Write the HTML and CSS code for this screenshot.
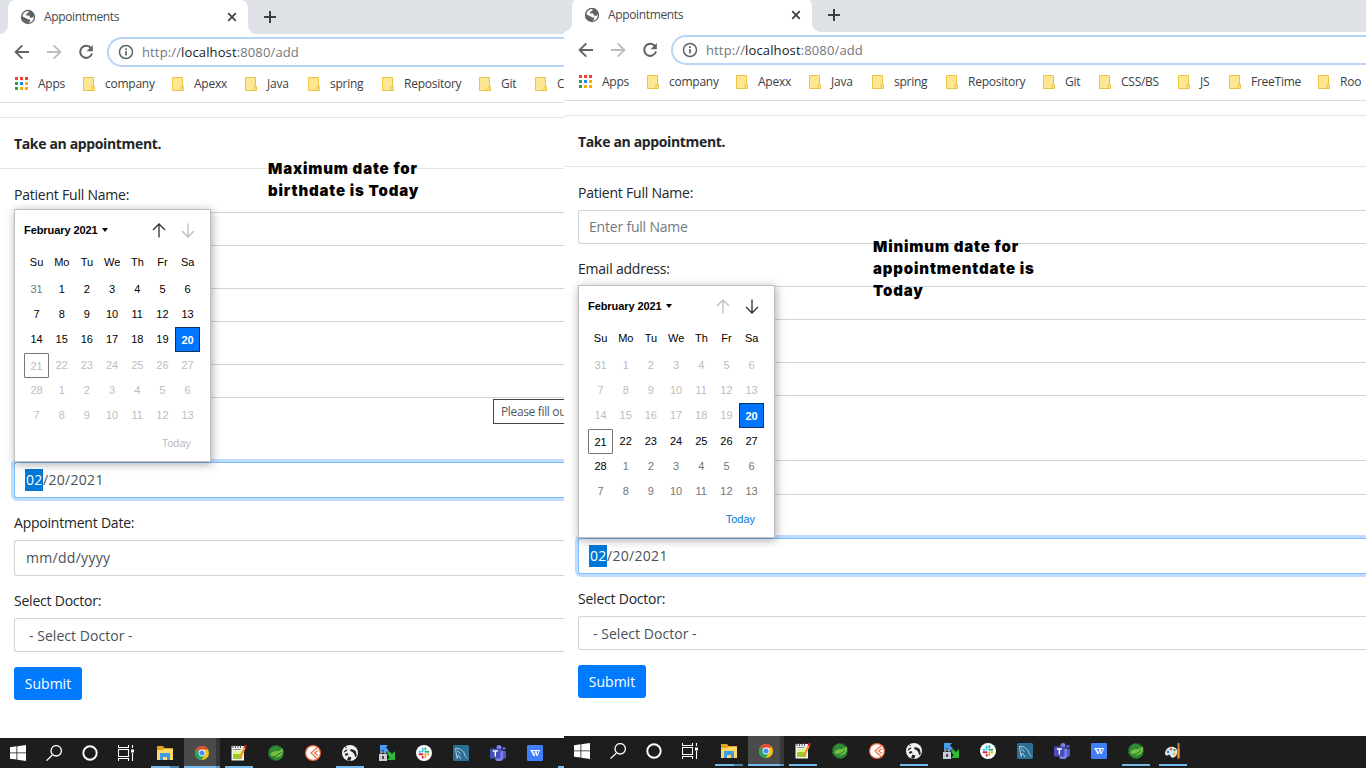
FILE: index.html
```html
<!DOCTYPE html>
<html lang="en">
<head>
<meta charset="utf-8">
<title>Appointments</title>
<link rel="stylesheet" href="styles.css">
</head>
<body>
<svg class="defs" aria-hidden="true">
  <symbol id="globe" viewBox="0 0 16 16"><circle cx="8" cy="8" r="7.2" fill="#5f6368"/><path d="M3 5.2c1.600-2.600 3.500-3.300 5.500-3.200L8.200 4 6.500 4.600 6 6.500h3.200L10 8.600l2.300.4 1-1.800.5 1.500c-.4 2.700-2.400 4.700-5 5.100L8 12l-.1-1.900L5.500 9 2.300 7.300z" fill="#fff"/><path d="M8 10.300l2.300.5-.4 1.700L8.200 14z" fill="#5f6368"/></symbol>
  <symbol id="close" viewBox="0 0 10 10"><path d="M1.200 1.200l7.600 7.600M8.800 1.200L1.200 8.800" stroke="#3c4043" stroke-width="1.700"/></symbol>
  <symbol id="plus" viewBox="0 0 12 12"><path d="M6 0v12M0 6h12" stroke="#3c4043" stroke-width="2"/></symbol>
  <symbol id="back" viewBox="0 0 16 16"><path d="M15 8H2M8.300 1.300L1.600 8l6.700 6.700" fill="none" stroke="currentColor" stroke-width="1.900"/></symbol>
  <symbol id="reload" viewBox="0 0 16 16"><path d="M13 4.200A6 6 0 1 0 14 9.500" fill="none" stroke="#5f6368" stroke-width="2"/><path d="M14.800 1v6.200H8.600z" fill="#5f6368"/></symbol>
  <symbol id="info" viewBox="0 0 16 16"><circle cx="8" cy="8" r="6.500" fill="none" stroke="#5f6368" stroke-width="1.500"/><path d="M8 7v4.600M8 4.300v1.700" stroke="#5f6368" stroke-width="1.700"/></symbol>
  <symbol id="apps" viewBox="0 0 13 13"><path d="M0 0h3v3H0zM5 0h3v3H5zM10 0h3v3h-3z" fill="#ea4335"/><path d="M0 5h3v3H0zM0 10h3v3H0z" fill="#2f9e56"/><path d="M5 5h3v3H5z" fill="#1a88f5"/><path d="M10 5h3v3h-3zM5 10h3v3H5zM10 10h3v3h-3z" fill="#f9ab00"/></symbol>
  <symbol id="folder" viewBox="0 0 12 14"><path d="M.5.500h10v13H.500z" fill="#ffe693" stroke="#e8c445"/><path d="M9 9.500h2.500v4H9z" fill="#ffe693" stroke="#e8c445"/></symbol>
  <symbol id="up" viewBox="0 0 14 15"><path d="M7 14.500V1.200M1 7l6-6 6 6" fill="none" stroke="currentColor" stroke-width="1.300"/></symbol>
  <symbol id="win" viewBox="0 0 16 16"><path d="M0 2.300L6.500 1.300v6.200H0zM7.300 1.200L16 0v7.500H7.300zM0 8.300h6.500v6.300L0 13.700zM7.300 8.300H16V16l-8.700-1.300z" fill="#fff"/></symbol>
  <symbol id="search" viewBox="0 0 16 16"><path d="M6.200 10.200L.5 15.600" stroke="#fff" stroke-width="1.300"/><circle cx="10.200" cy="5.800" r="5.200" fill="none" stroke="#fff" stroke-width="1.300"/></symbol>
  <symbol id="ring" viewBox="0 0 16 16"><circle cx="8" cy="8" r="6.700" fill="none" stroke="#fff" stroke-width="1.900"/></symbol>
  <symbol id="tasks" viewBox="0 0 16 16"><path d="M.5 0v2.500h10V0M.5 16v-2.500h10V16M.5 4.500h10v7H.500zM14.500 0v3M14.500 8v8" fill="none" stroke="#fff" stroke-width="1.100"/><path d="M13 4.500h3v3h-3z" fill="#fff"/></symbol>
  <symbol id="explorer" viewBox="0 0 16 16"><path d="M0 1h6l1.500 2H16v12H0z" fill="#e2a21a"/><path d="M0 5h6l1-1h9v11H0z" fill="#ffd866"/><path d="M3 8h10v7h-3v-3H6v3H3z" fill="#3f9be4"/></symbol>
  <symbol id="chrome" viewBox="0 0 16 16"><circle cx="8" cy="8" r="7" fill="#fbc116"/><path d="M8 8L1.900 4.500A7 7 0 0 1 14.100 4.600H8z" fill="#dd4b3e"/><path d="M1.900 4.500A7 7 0 0 0 7.700 15L11 9.800 8 8z" fill="#26a35c"/><circle cx="8" cy="8" r="3.400" fill="#fff"/><circle cx="8" cy="8" r="2.600" fill="#4c8bf5"/></symbol>
  <symbol id="notepad" viewBox="0 0 16 16"><path d="M.5 1h12.500v14.500H.500z" fill="#f2f2ee"/><path d="M2 7h9v7H2z" fill="#9ccc2c"/><path d="M2 6h9v3H2z" fill="#e1f58b"/><path d="M2 0v3M4.500 0v3M7 0v3M9.500 0v3" stroke="#555"/><path d="M2.500 4.500h7" stroke="#888"/><path d="M14 2L9 13" stroke="#f19a21" stroke-width="2.300"/><path d="M15 0l-1.200 3" stroke="#c9212c" stroke-width="2.500"/></symbol>
  <symbol id="spring" viewBox="0 0 16 16"><circle cx="8" cy="8" r="7.200" fill="#2f8a35" stroke="#2f8a35" stroke-width="1.400" stroke-dasharray="1.500 1"/><path d="M14.800 3c.6 6-2 9-6 9.200-2 .1-4-.5-5.200-.8C1 7.500 5.300 6.400 8.500 6.200 11.500 6 13.500 5 14.800 3z" fill="#76c043"/><path d="M2 12.300c5-.4 8.500-2 11-5.300" fill="none" stroke="#236a29"/></symbol>
  <symbol id="postman" viewBox="0 0 16 16"><circle cx="8" cy="8" r="8" fill="#f26b3a"/><circle cx="8" cy="8" r="6.800" fill="#fff"/><path d="M12.500 2.500L6 8l6 5.500M13 5.500L9.500 8l3.500 2.500" fill="none" stroke="#f26b3a" stroke-width="1.100"/></symbol>
  <symbol id="beaver" viewBox="0 0 16 16"><circle cx="8" cy="8" r="8" fill="#f5f3f1"/><path d="M3.300 1.600L5 2.300 3.700 3.600zM1.500 8C2 5.500 3.500 4.700 5.500 4.300L4.800 6 3 7z" fill="#292424"/><path d="M8 4.300c3-.3 5.200.7 6 2.500l.8 4-1.500 1.500-1.200-3.500C11 7 9.500 6.500 8.500 6.300z" fill="#292424"/><path d="M2.500 9l3-1 1 1.500L4 11zM6.500 11.500l3 1L8 16l-3-1z" fill="#292424"/></symbol>
  <symbol id="winscp" viewBox="0 0 16 16"><path d="M1 0h8L7 2.500l3 3L7 8 4 5 1 7.500z" fill="#4a9cf0"/><path d="M8 8l2-2 3 3 3-3v9H8l2.500-2.500z" fill="#2cba35"/><path d="M0 9h8v7H0z" fill="#c9ced9"/><path d="M2 9V7h4v2" fill="none" stroke="#c9ced9"/><path d="M3.300 11h1.500v3H3.300z" fill="#222"/></symbol>
  <symbol id="slack" viewBox="0 0 16 16"><circle cx="8" cy="8" r="8" fill="#fff"/><g stroke-width="1.900" stroke-linecap="round"><path d="M6.700 3.500v3M3.500 6.700h1" stroke="#36c5f0"/><path d="M9.300 6.700h3M9.300 3.300v1" stroke="#2eb67d"/><path d="M9.300 9.300v3M11.500 9.300h1" stroke="#ecb22e"/><path d="M3.500 9.300h3M6.700 11.700v1" stroke="#e01e5a"/></g></symbol>
  <symbol id="mysql" viewBox="0 0 16 16"><rect width="16" height="16" rx="1.500" fill="#2d6f94"/><path d="M4 13.500L2.500 3.500C6 3 10 5 11.500 9c.6 2 1.500 3.500 3 4.500M4 13.500L5.500 10l2.500 4M4.500 5.500l3 3.500" fill="none" stroke="#bcd9e6" stroke-width=".9"/></symbol>
  <symbol id="teams" viewBox="0 0 16 16"><circle cx="9" cy="2.500" r="2.500" fill="#7b83eb"/><circle cx="14" cy="3.500" r="1.800" fill="#5059c9"/><path d="M11.500 6H16v5.500c0 2-2 3-4 2z" fill="#5059c9"/><path d="M5 5.500h8v6.500a4 4 0 0 1-8 1z" fill="#7b83eb"/><rect y="3.500" width="10.500" height="10" rx=".7" fill="#464eb8"/><path d="M2.800 6h5M5.300 6v5.500" stroke="#fff" stroke-width="1.400"/></symbol>
  <symbol id="wps" viewBox="0 0 16 16"><rect width="16" height="16" rx="1.200" fill="#417ff9"/><path d="M3.500 5.500h2L7 11l2-5 1 5 2.500-5.500M5.500 5.500h7M7 11L4 5.500" fill="none" stroke="#fff" stroke-width="1"/></symbol>
  <symbol id="paint" viewBox="0 0 16 16"><path d="M0 11C0 6 4 3 8.500 4c4 1 4.500 5 3 8-1 2-3 3-5 2.500-1.500-.4-.5-2.500-2-2.700C3 11.700 1.500 14 0 11z" fill="#dce9f1"/><circle cx="3" cy="9" r="1.400" fill="#2d90dd"/><circle cx="6" cy="6.300" r="1.200" fill="#e8473b"/><circle cx="9.500" cy="7" r="1.200" fill="#40a849"/><circle cx="9" cy="11" r="1.300" fill="#efb52b"/><path d="M13.500 0v7" stroke="#c98850" stroke-width="2"/><path d="M13.500 6v9.500" stroke="#f08a24" stroke-width="2.500"/></symbol>
</svg>

<main class="desktop">
  <section class="pane pane-birth">
    <header class="tabs"><div class="tab"><svg class="i16"><use href="#globe"/></svg><span>Appointments</span><svg class="close"><use href="#close"/></svg></div><svg class="plus"><use href="#plus"/></svg></header>
    <div class="toolbar"><svg class="i16 nav"><use href="#back"/></svg><svg class="i16 nav fwd"><use href="#back"/></svg><svg class="i16"><use href="#reload"/></svg><div class="omnibox"><svg class="i16"><use href="#info"/></svg><span>http://<b>localhost</b>:8080/add</span></div></div>
    <nav class="bookmarks"><a><svg class="apps"><use href="#apps"/></svg>Apps</a><a><svg><use href="#folder"/></svg>company</a><a><svg><use href="#folder"/></svg>Apexx</a><a><svg><use href="#folder"/></svg>Java</a><a><svg><use href="#folder"/></svg>spring</a><a><svg><use href="#folder"/></svg>Repository</a><a><svg><use href="#folder"/></svg>Git</a><a><svg><use href="#folder"/></svg>CSS/BS</a></nav>
    <form class="page">
      <h1>Take an appointment.</h1>
      <label class="first">Patient Full Name:</label><div class="field"></div>
      <label></label><div class="field"></div>
      <label></label><div class="field"></div>
      <label class="tall"></label>
      <div class="field date focus"><span><mark>02</mark>/20/2021</span>
        <div class="calendar">
          <div class="cal-head"><strong>February 2021</strong><i></i><svg><use href="#up"/></svg><svg class="down off"><use href="#up"/></svg></div>
          <div class="week"><span>Su</span><span>Mo</span><span>Tu</span><span>We</span><span>Th</span><span>Fr</span><span>Sa</span></div>
          <div class="days"><span class="other">31</span><span>1</span><span>2</span><span>3</span><span>4</span><span>5</span><span>6</span><span>7</span><span>8</span><span>9</span><span>10</span><span>11</span><span>12</span><span>13</span><span>14</span><span>15</span><span>16</span><span>17</span><span>18</span><span>19</span><span class="sel">20</span><span class="off now">21</span><span class="off">22</span><span class="off">23</span><span class="off">24</span><span class="off">25</span><span class="off">26</span><span class="off">27</span><span class="off">28</span><span class="off">1</span><span class="off">2</span><span class="off">3</span><span class="off">4</span><span class="off">5</span><span class="off">6</span><span class="off">7</span><span class="off">8</span><span class="off">9</span><span class="off">10</span><span class="off">11</span><span class="off">12</span><span class="off">13</span></div>
          <div class="today off">Today</div>
        </div>
      </div>
      <label>Appointment Date:</label><div class="field date"><span class="empty">mm/dd/yyyy</span></div>
      <label>Select Doctor:</label><div class="field select">- Select Doctor -</div>
      <button type="button">Submit</button>
    </form>
    <footer class="taskbar"><div class="sys"><svg><use href="#win"/></svg></div><div class="sys"><svg><use href="#search"/></svg></div><div class="sys"><svg><use href="#ring"/></svg></div><div class="sys"><svg><use href="#tasks"/></svg></div><div class="task open multi"><svg><use href="#explorer"/></svg></div><div class="task active"><svg><use href="#chrome"/></svg></div><div class="task open"><svg><use href="#notepad"/></svg></div><div class="task"><svg><use href="#spring"/></svg></div><div class="task"><svg><use href="#postman"/></svg></div><div class="task open"><svg><use href="#beaver"/></svg></div><div class="task"><svg><use href="#winscp"/></svg></div><div class="task"><svg><use href="#slack"/></svg></div><div class="task"><svg><use href="#mysql"/></svg></div><div class="task"><svg><use href="#teams"/></svg></div><div class="task"><svg><use href="#wps"/></svg></div><div class="task open"></div></footer>
    <div class="tip">Please fill out</div>
    <p class="note">Maximum date for<br>birthdate is Today</p>
  </section>

  <section class="pane pane-appt">
    <header class="tabs"><div class="tab"><svg class="i16"><use href="#globe"/></svg><span>Appointments</span><svg class="close"><use href="#close"/></svg></div><svg class="plus"><use href="#plus"/></svg></header>
    <div class="toolbar"><svg class="i16 nav"><use href="#back"/></svg><svg class="i16 nav fwd"><use href="#back"/></svg><svg class="i16"><use href="#reload"/></svg><div class="omnibox"><svg class="i16"><use href="#info"/></svg><span>http://<b>localhost</b>:8080/add</span></div></div>
    <nav class="bookmarks"><a><svg class="apps"><use href="#apps"/></svg>Apps</a><a><svg><use href="#folder"/></svg>company</a><a><svg><use href="#folder"/></svg>Apexx</a><a><svg><use href="#folder"/></svg>Java</a><a><svg><use href="#folder"/></svg>spring</a><a><svg><use href="#folder"/></svg>Repository</a><a><svg><use href="#folder"/></svg>Git</a><a><svg><use href="#folder"/></svg>CSS/BS</a><a><svg><use href="#folder"/></svg>JS</a><a><svg><use href="#folder"/></svg>FreeTime</a><a><svg><use href="#folder"/></svg>Roo</a></nav>
    <form class="page">
      <h1>Take an appointment.</h1>
      <label class="first">Patient Full Name:</label><div class="field hint">Enter full Name</div>
      <label>Email address:</label><div class="field"></div>
      <label></label><div class="field"></div>
      <label class="tall"></label><div class="field date short"></div>
      <label></label>
      <div class="field date focus"><span><mark>02</mark>/20/2021</span>
        <div class="calendar">
          <div class="cal-head"><strong>February 2021</strong><i></i><svg class="off"><use href="#up"/></svg><svg class="down"><use href="#up"/></svg></div>
          <div class="week"><span>Su</span><span>Mo</span><span>Tu</span><span>We</span><span>Th</span><span>Fr</span><span>Sa</span></div>
          <div class="days"><span class="off">31</span><span class="off">1</span><span class="off">2</span><span class="off">3</span><span class="off">4</span><span class="off">5</span><span class="off">6</span><span class="off">7</span><span class="off">8</span><span class="off">9</span><span class="off">10</span><span class="off">11</span><span class="off">12</span><span class="off">13</span><span class="off">14</span><span class="off">15</span><span class="off">16</span><span class="off">17</span><span class="off">18</span><span class="off">19</span><span class="sel">20</span><span class="now">21</span><span>22</span><span>23</span><span>24</span><span>25</span><span>26</span><span>27</span><span>28</span><span class="other">1</span><span class="other">2</span><span class="other">3</span><span class="other">4</span><span class="other">5</span><span class="other">6</span><span class="other">7</span><span class="other">8</span><span class="other">9</span><span class="other">10</span><span class="other">11</span><span class="other">12</span><span class="other">13</span></div>
          <div class="today">Today</div>
        </div>
      </div>
      <label>Select Doctor:</label><div class="field select">- Select Doctor -</div>
      <button type="button">Submit</button>
    </form>
    <footer class="taskbar"><div class="sys"><svg><use href="#win"/></svg></div><div class="sys"><svg><use href="#search"/></svg></div><div class="sys"><svg><use href="#ring"/></svg></div><div class="sys"><svg><use href="#tasks"/></svg></div><div class="task open multi"><svg><use href="#explorer"/></svg></div><div class="task active"><svg><use href="#chrome"/></svg></div><div class="task open"><svg><use href="#notepad"/></svg></div><div class="task"><svg><use href="#spring"/></svg></div><div class="task"><svg><use href="#postman"/></svg></div><div class="task open"><svg><use href="#beaver"/></svg></div><div class="task"><svg><use href="#winscp"/></svg></div><div class="task"><svg><use href="#slack"/></svg></div><div class="task"><svg><use href="#mysql"/></svg></div><div class="task"><svg><use href="#teams"/></svg></div><div class="task"><svg><use href="#wps"/></svg></div><div class="task open"><svg><use href="#spring"/></svg></div><div class="task open"><svg><use href="#paint"/></svg></div></footer>
    <p class="note">Minimum date for<br>appointmentdate is<br>Today</p>
  </section>
</main>
</body>
</html>
```
FILE: styles.css
```css
* { box-sizing: border-box; }
body { margin: 0; background: #fff; color: #212529; font: 14px/20px "Open Sans", sans-serif; overflow: hidden; }
svg { display: block; flex: none; }
.defs { position: absolute; width: 0; height: 0; }
.desktop { display: flex; width: 1366px; height: 768px; overflow: hidden; }
.pane { position: relative; display: flex; flex-direction: column; width: 564px; height: 770px; overflow: hidden; }
.pane-appt { width: 802px; margin-top: -2px; }
.i16 { width: 16px; height: 16px; }

.tabs { display: flex; align-items: center; height: 34px; padding-left: 8px; background: #dee1e6; flex: none; }
.tab { position: relative; display: flex; align-items: center; width: 240px; height: 34px; padding: 0 11px 0 12px; background: #fff; border-radius: 8px 8px 0 0; font-size: 12px; letter-spacing: -.35px; color: #45494d; }
.tab::before, .tab::after { content: ""; position: absolute; bottom: 0; width: 8px; height: 8px; }
.tab::before { left: -8px; background: radial-gradient(circle at 0 0, #dee1e6 7.500px, #fff 8px); }
.tab::after { right: -8px; background: radial-gradient(circle at 100% 0, #dee1e6 7.500px, #fff 8px); }
.tab span { margin-left: 8px; }
.close { width: 10px; height: 10px; margin-left: auto; }
.plus { width: 12px; height: 12px; margin-left: 16px; }

.toolbar { display: flex; align-items: center; gap: 16px; height: 35px; padding: 1px 0 0 14px; flex: none; }
.nav { color: #5f6368; }
.fwd { color: #babcbe; transform: scaleX(-1); }
.omnibox { display: flex; align-items: center; gap: 8px; flex: 1; height: 30px; margin-left: -3px; padding-left: 9px; border: 2px solid #b8d4f7; border-right: 0; border-radius: 15px 0 0 15px; font-size: 13px; letter-spacing: .13px; color: #73777b; white-space: nowrap; }
.omnibox b { font-weight: 400; color: #202124; }

.bookmarks { display: flex; height: 34px; padding-left: 15px; border-bottom: 1px solid #dadce0; flex: none; font-size: 12px; letter-spacing: -.25px; color: #3c4043; overflow: hidden; }
.bookmarks a { display: flex; align-items: center; gap: 10px; flex: none; height: 29px; width: 68px; white-space: nowrap; }
.bookmarks svg { width: 12px; height: 14px; }
.bookmarks .apps { width: 13px; height: 13px; }
.bookmarks a:nth-child(2) { width: 89px; }
.bookmarks a:nth-child(3) { width: 73px; }
.bookmarks a:nth-child(4) { width: 63px; }
.bookmarks a:nth-child(5) { width: 74px; }
.bookmarks a:nth-child(6) { width: 97px; }
.bookmarks a:nth-child(7) { width: 56px; }
.bookmarks a:nth-child(8) { width: 79px; }
.bookmarks a:nth-child(9) { width: 51px; }
.bookmarks a:nth-child(10) { width: 89px; }

.page { flex: 1; padding: 14px 0 0; }
h1 { margin: 0; height: 52px; padding: 0 14px; border: solid #e3e3e3; border-width: 1px 0; font-size: 14px; line-height: 52px; font-weight: 700; letter-spacing: -.35px; }
label { display: block; height: 42px; padding: 15px 0 0 14px; letter-spacing: -.22px; }
label.first { height: 43px; padding-top: 16px; }
label.tall { height: 64px; }
.field { position: relative; height: 34px; margin-left: 14px; padding-left: 10px; border: 1px solid #ced4da; border-right: 0; border-radius: 3px 0 0 3px; line-height: 32px; color: #495057; background: #fff; }
.hint { color: #737a81; letter-spacing: -.2px; }
.date { height: 36px; line-height: 34px; letter-spacing: .3px; }
.short { height: 35px; margin-bottom: 1px; }
.empty { margin-left: 1px; }
.select { padding-left: 14px; line-height: 34px; letter-spacing: .04px; }
.focus { border-color: #80bdff; box-shadow: 0 0 0 3px #bfdeff; }
mark { display: inline-block; width: 18px; height: 22px; padding-left: 1px; line-height: 22px; background: #0078d7; color: #fff; }
button { display: block; width: 68px; height: 33px; margin: 15px 0 0 14px; padding: 0; border: 0; border-radius: 3px; background: #007bff; color: #fff; font: 14px/33px "Open Sans", sans-serif; }

.calendar { position: absolute; left: -1px; bottom: 35px; z-index: 2; width: 197px; height: 253px; padding: 0 9px; border: 1px solid #bfbfbf; background: #fff; box-shadow: 1px 2px 9px rgba(0,0,0,.35); color: #000; font: 11px/24px "Liberation Sans", sans-serif; letter-spacing: 0; }
.cal-head { display: flex; align-items: center; height: 41px; padding-bottom: 1px; }
.cal-head strong { letter-spacing: -.08px; }
.cal-head i { margin-left: 4px; border: 3px solid transparent; border-top: 4px solid #000; border-bottom: 0; }
.cal-head svg { width: 14px; height: 15px; color: #333; margin-left: auto; }
.cal-head svg + svg { margin: 0 6px 0 15px; }
.down { transform: rotate(180deg); }
.week, .days { display: grid; grid-template-columns: repeat(7, 25.200px); text-align: center; }
.week { height: 26px; line-height: 22px; }
.days { grid-auto-rows: 25.200px; line-height: 25px; }
.days span { width: 25px; height: 25px; }
.days .other { color: #757575; }
.calendar .off { color: #bdbdbd; }
.days .sel { border: 1px solid #10335c; background: #0075ff; color: #fff; font-weight: 700; line-height: 24px; }
.days .now { border: 1px solid #767676; border-radius: 1px; line-height: 24px; }
.today { padding: 4px 10px 0 0; text-align: right; color: #0078d7; line-height: 22px; }

.tip { position: absolute; left: 493px; top: 399px; width: 90px; height: 25px; padding: 0 7px; border: 1px solid #444; background: #fff; color: #575757; font-size: 12px; line-height: 23px; letter-spacing: -.35px; white-space: nowrap; }
.note { position: absolute; left: 268px; top: 158px; margin: 0; color: #000; font: 900 15px/22px Inter, sans-serif; letter-spacing: .84px; white-space: nowrap; }
.pane-appt .note { left: 309px; top: 238px; }

.taskbar { display: flex; height: 32px; background: #1d1d1d; flex: none; }
.taskbar svg { width: 16px; height: 16px; margin: 7px auto 0; }
.sys { flex: none; width: 36px; }
.sys:nth-child(4) { width: 38px; padding-right: 2px; }
.task { flex: none; position: relative; width: 37px; height: 30px; }
.open { background: linear-gradient(#76b9ed, #76b9ed) 5px 28px / 28px 2px no-repeat; }
.multi { background: linear-gradient(90deg, #76b9ed 19px, #4e84aa 19px) 5px 28px / 28px 2px no-repeat; }
.active { background: linear-gradient(90deg, #76b9ed 32px, #5d93bd 32px) 1px 28px / 36px 2px no-repeat, linear-gradient(90deg, #4b4b4b 32px, #363636 32px) 1px 0 / 36px 30px no-repeat; }
```
